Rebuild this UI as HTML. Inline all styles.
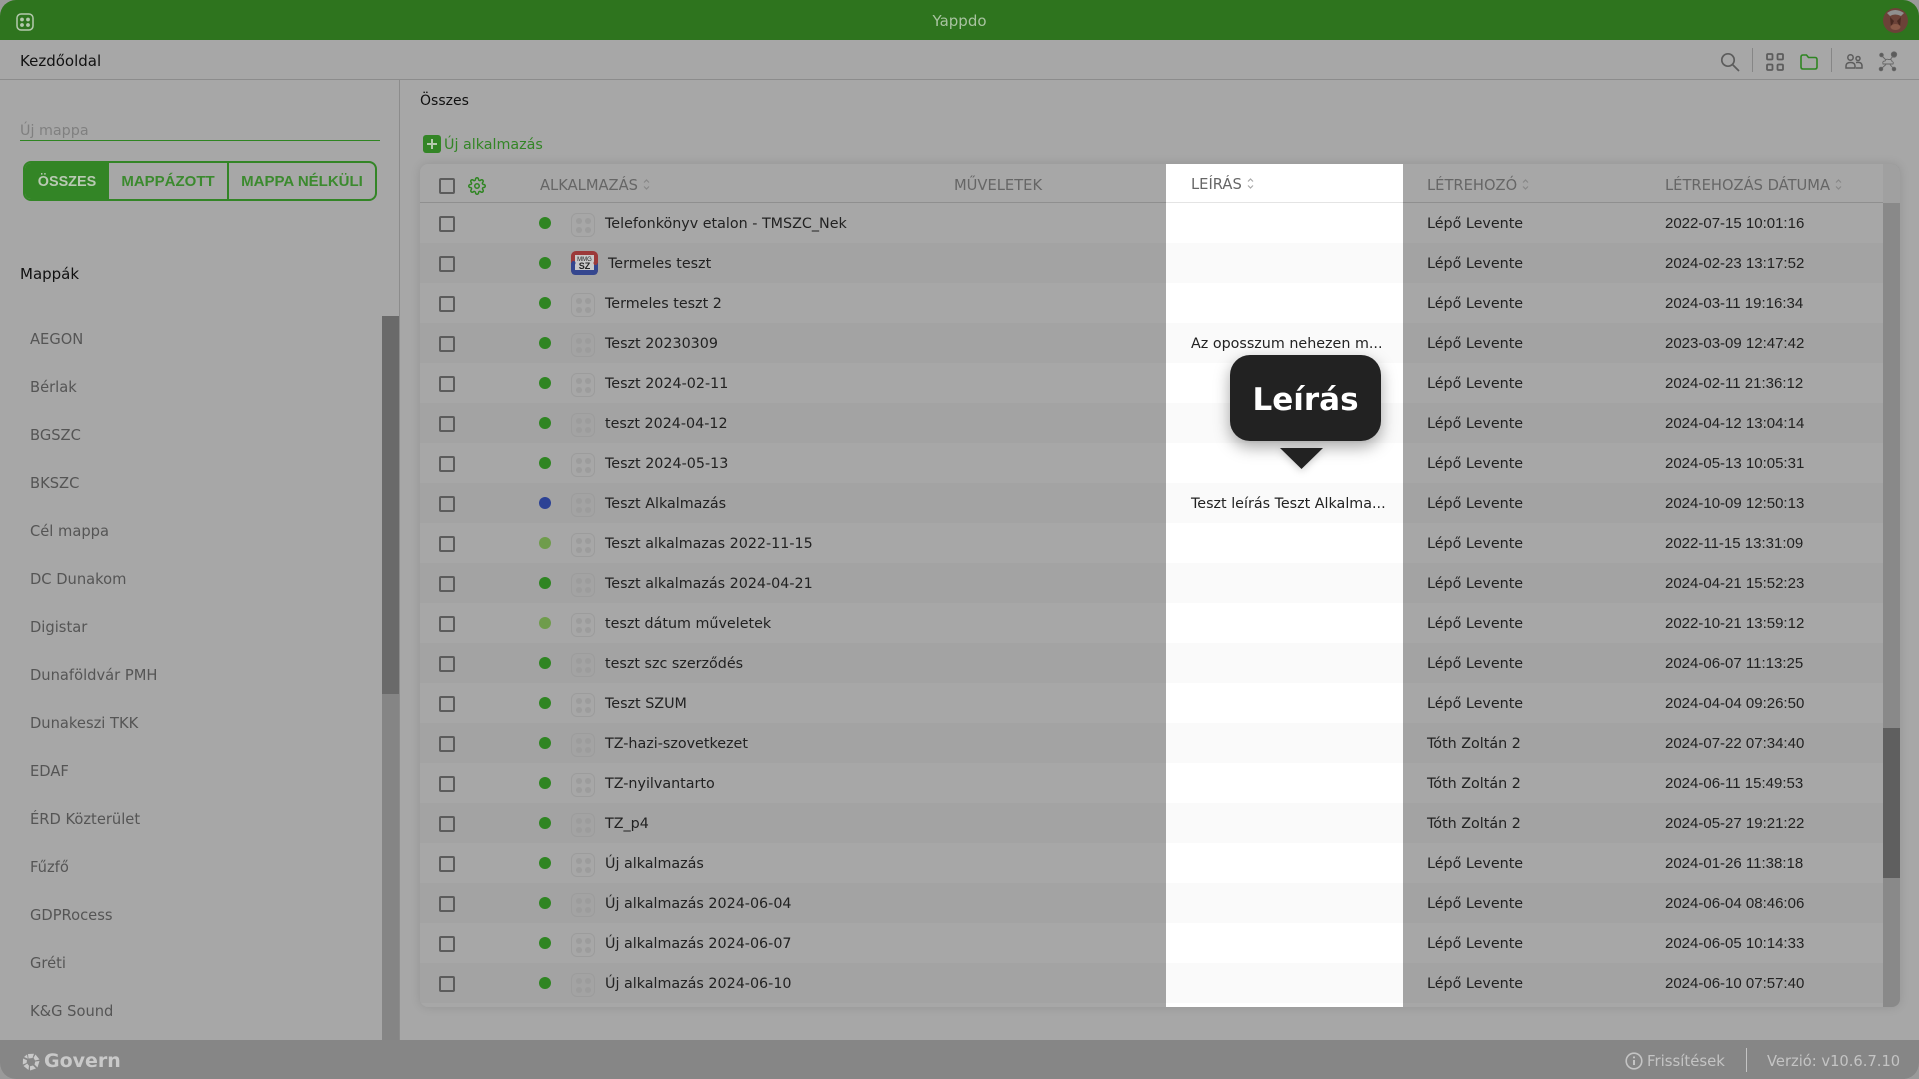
<!DOCTYPE html>
<html lang="hu"><head><meta charset="utf-8"><title>Yappdo</title>
<style>
*{box-sizing:border-box}
html,body{margin:0;padding:0;width:1919px;height:1079px;overflow:hidden;background:#9a9a9a}
body{font-family:"DejaVu Sans","Liberation Sans",sans-serif;font-size:14.3px;color:#222;position:relative}
.a{position:absolute;white-space:nowrap}
#app{position:absolute;left:0;top:0;width:1919px;height:1079px;background:#a7a7a7;border-radius:16px;overflow:hidden}
.fold{position:absolute;left:30px;color:#555;font-size:14.7px;line-height:22px}
.row{position:absolute;left:0;width:1463px;height:40px}
.row.o{background:#a3a3a3}
.row>*{position:absolute;white-space:nowrap;line-height:42px}
.cb{left:19px;top:13px;width:16px;height:16px;border:2px solid #5c5c5c;border-radius:2px;background:transparent}
.dot{left:119px;top:14px;width:12px;height:12px;border-radius:50%;background:#2f8522}
.ic{left:151px;top:10px;width:24px;height:24px;border:1.5px solid #9c9c9c;border-radius:6px}
.ic:before{content:"";position:absolute;left:4px;top:4px;width:6px;height:6px;border-radius:50%;background:#9c9c9c;box-shadow:9px 0 #9c9c9c,0 9px #9c9c9c,9px 9px #9c9c9c}
.n{left:185px}
.c1{left:1007px}
.c2{left:1245px;font-family:"Liberation Sans",sans-serif;font-size:15px}
.hd{position:absolute;top:0;line-height:43px;color:#666;font-size:14.7px;white-space:nowrap}
.hd svg,.lh svg{display:inline-block;margin-left:5px;vertical-align:-1px}
.sp{position:absolute;left:1166px;top:203px;width:237px;height:804px;background:#fff}
.sp div{position:absolute;left:0;width:237px;height:40px;line-height:42px;padding-left:25px;white-space:nowrap;color:#222}
.sp .o{background:#fafafa}
</style></head>
<body>
<div id="app">
<!-- top bar -->
<div class="a" style="left:0;top:0;width:1919px;height:40px;background:#2e741e"></div>
<svg class="a" style="left:16px;top:13px" width="18" height="18" viewBox="0 0 18 18"><rect x="1" y="1" width="16" height="16" rx="4" fill="none" stroke="#b5c9ae" stroke-width="1.5"/><circle cx="6" cy="6.5" r="1.9" fill="#b5c9ae"/><circle cx="12" cy="6.5" r="1.9" fill="#b5c9ae"/><circle cx="6" cy="12" r="1.9" fill="#b5c9ae"/><circle cx="12" cy="12" r="1.9" fill="#b5c9ae"/></svg>
<div class="a" style="left:0;top:1px;width:1919px;text-align:center;line-height:40px;color:#a9c3a1;font-size:15px">Yappdo</div>
<svg class="a" style="left:1883px;top:8px" width="25" height="25" viewBox="0 0 25 25"><circle cx="12.5" cy="12.5" r="12.5" fill="#6b4238"/><path d="M4 5Q12-1 21 5L18 8Q12 5 7 8Z" fill="#8f8f8f"/><path d="M7 9L11 13L8 19ZM18 9L14 13L17 19Z" fill="#4a2a22"/><ellipse cx="12.5" cy="19" rx="5" ry="3" fill="#8a5a48"/></svg>

<!-- sub bar -->
<div class="a" style="left:0;top:40px;width:1919px;height:40px;border-bottom:1.5px solid #8c8c8c;background:#a7a7a7"></div>
<div class="a" style="left:20px;top:41px;line-height:40px;color:#111;font-size:15px">Kezdőoldal</div>
<svg class="a" style="left:1720px;top:52px" width="20" height="20" viewBox="0 0 20 20" fill="none" stroke="#5c5c5c" stroke-width="1.7"><circle cx="8" cy="8" r="6.2"/><path d="M12.6 12.6L19 19"/></svg>
<div class="a" style="left:1752px;top:48px;width:1px;height:24px;background:#868686"></div>
<svg class="a" style="left:1766px;top:53px" width="18" height="18" viewBox="0 0 18 18" fill="none" stroke="#5c5c5c" stroke-width="1.8"><rect x="1" y="1" width="5.5" height="5.5" rx="1"/><rect x="11.5" y="1" width="5.5" height="5.5" rx="1"/><rect x="1" y="11.5" width="5.5" height="5.5" rx="1"/><rect x="11.5" y="11.5" width="5.5" height="5.5" rx="1"/></svg>
<svg class="a" style="left:1800px;top:54px" width="18" height="16" viewBox="0 0 18 16" fill="none" stroke="#2f8522" stroke-width="1.6"><path d="M1 3Q1 1 3 1H6.5L8.5 3.5H15Q17 3.5 17 5.5V13Q17 15 15 15H3Q1 15 1 13Z"/></svg>
<div class="a" style="left:1831px;top:48px;width:1px;height:24px;background:#868686"></div>
<svg class="a" style="left:1845px;top:54px" width="18" height="15" viewBox="0 0 18 15" fill="none" stroke="#5c5c5c" stroke-width="1.5"><circle cx="5.5" cy="3.5" r="2.7"/><circle cx="13" cy="4.5" r="2"/><path d="M1 14V12Q1 8.5 5.5 8.5T10 12V14Z"/><path d="M11 8.5Q17 7.5 17 12V14H11"/></svg>
<svg class="a" style="left:1878px;top:51px" width="20" height="21" viewBox="0 0 20 21" fill="none" stroke="#666" stroke-width=".9"><circle cx="3.5" cy="4" r="1.8" fill="#5c5c5c"/><circle cx="16" cy="3.5" r="2.7" fill="#5c5c5c"/><circle cx="3" cy="18" r="1.8" fill="#5c5c5c"/><circle cx="16" cy="18" r="1.8" fill="#5c5c5c"/><path d="M4 5L8 9M15 5L12 9M4 17L8 13.5M15 17L12 13.5"/><path d="M5 13Q4 10 7 10Q8 7.5 10.5 8.5Q14 8 14 10.5Q16 11 15 13Z"/></svg>

<!-- sidebar -->
<div class="a" style="left:399px;top:80px;width:1px;height:960px;background:#8c8c8c"></div>
<div class="a" style="left:20px;top:120px;line-height:22px;color:#808080;font-size:14.3px">Új mappa</div>
<div class="a" style="left:20px;top:139.5px;width:360px;height:1.5px;background:#2f8522"></div>
<div class="a" style="left:23px;top:161px;width:354px;height:40px;border:2px solid #338526;border-radius:8px;overflow:hidden;font-size:15px;color:#3b8a2e;line-height:38px;font-family:'Liberation Sans',sans-serif;font-weight:bold">
  <div class="a" style="left:0;top:0;width:84px;height:36px;background:#338526;color:#b9c9b3;text-align:center;font-size:14.4px">ÖSSZES</div>
  <div class="a" style="left:84px;top:0;width:120px;height:36px;border-right:2px solid #338526;text-align:center">MAPPÁZOTT</div>
  <div class="a" style="left:204px;top:0;width:146px;height:36px;text-align:center">MAPPA NÉLKÜLI</div>
</div>
<div class="a" style="left:20px;top:264px;line-height:20px;color:#111;font-size:15px">Mappák</div>
<div class="fold" style="top:329px">AEGON</div>
<div class="fold" style="top:377px">Bérlak</div>
<div class="fold" style="top:425px">BGSZC</div>
<div class="fold" style="top:473px">BKSZC</div>
<div class="fold" style="top:521px">Cél mappa</div>
<div class="fold" style="top:569px">DC Dunakom</div>
<div class="fold" style="top:617px">Digistar</div>
<div class="fold" style="top:665px">Dunaföldvár PMH</div>
<div class="fold" style="top:713px">Dunakeszi TKK</div>
<div class="fold" style="top:761px">EDAF</div>
<div class="fold" style="top:809px">ÉRD Közterület</div>
<div class="fold" style="top:857px">Fűzfő</div>
<div class="fold" style="top:905px">GDPRocess</div>
<div class="fold" style="top:953px">Gréti</div>
<div class="fold" style="top:1001px">K&amp;G Sound</div>
<div class="a" style="left:382px;top:316px;width:17px;height:724px;background:#858585"></div>
<div class="a" style="left:382px;top:316px;width:17px;height:378px;background:#6a6a6a"></div>

<!-- main -->
<div class="a" style="left:420px;top:91px;line-height:20px;color:#111;font-size:14px">Összes</div>
<svg class="a" style="left:423px;top:135px" width="18" height="18" viewBox="0 0 18 18"><rect width="18" height="18" rx="3" fill="#338526"/><path d="M9 4V14M4 9H14" stroke="#b5c9ae" stroke-width="2"/></svg>
<div class="a" style="left:444px;top:135px;line-height:20px;color:#338526;font-size:14.3px">Új alkalmazás</div>

<!-- table -->
<div class="a" style="left:420px;top:164px;width:1480px;height:843px;background:#a7a7a7;border-radius:8px;box-shadow:0 0 10px rgba(0,0,0,.12);overflow:hidden">
  <div class="a" style="left:0;top:0;width:1480px;height:39px;border-bottom:1.5px solid #8f8f8f"></div>
  <div class="a" style="left:19px;top:14px;width:16px;height:16px;border:2px solid #5c5c5c;border-radius:2px"></div>
  <svg class="a" style="left:48px;top:13px" width="18" height="18" viewBox="0 0 24 24" fill="none" stroke="#2f8522" stroke-width="2"><circle cx="12" cy="12" r="3"/><path d="M19.4 15a1.65 1.65 0 0 0 .33 1.82l.06.06a2 2 0 0 1 0 2.83 2 2 0 0 1-2.83 0l-.06-.06a1.65 1.65 0 0 0-1.82-.33 1.65 1.65 0 0 0-1 1.51V21a2 2 0 0 1-2 2 2 2 0 0 1-2-2v-.09A1.65 1.65 0 0 0 9 19.4a1.65 1.65 0 0 0-1.82.33l-.06.06a2 2 0 0 1-2.83 0 2 2 0 0 1 0-2.83l.06-.06a1.65 1.65 0 0 0 .33-1.82 1.65 1.65 0 0 0-1.51-1H3a2 2 0 0 1-2-2 2 2 0 0 1 2-2h.09A1.65 1.65 0 0 0 4.6 9a1.65 1.65 0 0 0-.33-1.82l-.06-.06a2 2 0 0 1 0-2.83 2 2 0 0 1 2.83 0l.06.06a1.65 1.65 0 0 0 1.82.33H9a1.65 1.65 0 0 0 1-1.51V3a2 2 0 0 1 2-2 2 2 0 0 1 2 2v.09a1.65 1.65 0 0 0 1 1.51 1.65 1.65 0 0 0 1.82-.33l.06-.06a2 2 0 0 1 2.83 0 2 2 0 0 1 0 2.83l-.06.06a1.65 1.65 0 0 0-.33 1.82V9a1.65 1.65 0 0 0 1.51 1H21a2 2 0 0 1 2 2 2 2 0 0 1-2 2h-.09a1.65 1.65 0 0 0-1.51 1z"/></svg>
  <div class="hd" style="left:120px">ALKALMAZÁS<svg width="7" height="13" viewBox="0 0 7 13" fill="none" stroke="#888" stroke-width="1.2"><path d="M1 4.5L3.5 2L6 4.5M1 8.5L3.5 11L6 8.5"/></svg></div>
  <div class="hd" style="left:534px">MŰVELETEK</div>
  <div class="hd" style="left:1007px">LÉTREHOZÓ<svg width="7" height="13" viewBox="0 0 7 13" fill="none" stroke="#888" stroke-width="1.2"><path d="M1 4.5L3.5 2L6 4.5M1 8.5L3.5 11L6 8.5"/></svg></div>
  <div class="hd" style="left:1245px">LÉTREHOZÁS DÁTUMA<svg width="7" height="13" viewBox="0 0 7 13" fill="none" stroke="#888" stroke-width="1.2"><path d="M1 4.5L3.5 2L6 4.5M1 8.5L3.5 11L6 8.5"/></svg></div>

  <div class="a" style="left:0;top:39px;width:1463px;height:804px">
   <div class="row" style="top:0"><span class="cb"></span><span class="dot"></span><span class="ic"></span><span class="n">Telefonkönyv etalon - TMSZC_Nek</span><span class="c1">Lépő Levente</span><span class="c2">2022-07-15 10:01:16</span></div>
   <div class="row o" style="top:40px"><span class="cb"></span><span class="dot"></span>
     <svg style="position:absolute;left:151px;top:8px" width="27" height="24" viewBox="0 0 27 24"><rect width="27" height="24" rx="5" fill="#9c3a3a"/><path d="M0 12H27V19Q27 24 22 24H5Q0 24 0 19Z" fill="#35478f"/><rect x="4" y="4" width="19" height="15" fill="#c9c9c9"/><circle cx="2.5" cy="12" r="2" fill="#35478f"/><circle cx="24.5" cy="12" r="2" fill="#9c3a3a"/><text x="13.5" y="10" text-anchor="middle" font-family="Liberation Sans" font-size="6" fill="#222">MMG</text><text x="13.5" y="18" text-anchor="middle" font-family="Liberation Sans" font-weight="bold" font-size="9" fill="#222">SZ</text></svg>
     <span class="n" style="left:188px">Termeles teszt</span><span class="c1">Lépő Levente</span><span class="c2">2024-02-23 13:17:52</span></div>
   <div class="row" style="top:80px"><span class="cb"></span><span class="dot"></span><span class="ic"></span><span class="n">Termeles teszt 2</span><span class="c1">Lépő Levente</span><span class="c2">2024-03-11 19:16:34</span></div>
   <div class="row o" style="top:120px"><span class="cb"></span><span class="dot"></span><span class="ic"></span><span class="n">Teszt 20230309</span><span class="c1">Lépő Levente</span><span class="c2">2023-03-09 12:47:42</span></div>
   <div class="row" style="top:160px"><span class="cb"></span><span class="dot"></span><span class="ic"></span><span class="n">Teszt 2024-02-11</span><span class="c1">Lépő Levente</span><span class="c2">2024-02-11 21:36:12</span></div>
   <div class="row o" style="top:200px"><span class="cb"></span><span class="dot"></span><span class="ic"></span><span class="n">teszt 2024-04-12</span><span class="c1">Lépő Levente</span><span class="c2">2024-04-12 13:04:14</span></div>
   <div class="row" style="top:240px"><span class="cb"></span><span class="dot"></span><span class="ic"></span><span class="n">Teszt 2024-05-13</span><span class="c1">Lépő Levente</span><span class="c2">2024-05-13 10:05:31</span></div>
   <div class="row o" style="top:280px"><span class="cb"></span><span class="dot" style="background:#2c4295"></span><span class="ic"></span><span class="n">Teszt Alkalmazás</span><span class="c1">Lépő Levente</span><span class="c2">2024-10-09 12:50:13</span></div>
   <div class="row" style="top:320px"><span class="cb"></span><span class="dot" style="background:#6f9c4c"></span><span class="ic"></span><span class="n">Teszt alkalmazas 2022-11-15</span><span class="c1">Lépő Levente</span><span class="c2">2022-11-15 13:31:09</span></div>
   <div class="row o" style="top:360px"><span class="cb"></span><span class="dot"></span><span class="ic"></span><span class="n">Teszt alkalmazás 2024-04-21</span><span class="c1">Lépő Levente</span><span class="c2">2024-04-21 15:52:23</span></div>
   <div class="row" style="top:400px"><span class="cb"></span><span class="dot" style="background:#6f9c4c"></span><span class="ic"></span><span class="n">teszt dátum műveletek</span><span class="c1">Lépő Levente</span><span class="c2">2022-10-21 13:59:12</span></div>
   <div class="row o" style="top:440px"><span class="cb"></span><span class="dot"></span><span class="ic"></span><span class="n">teszt szc szerződés</span><span class="c1">Lépő Levente</span><span class="c2">2024-06-07 11:13:25</span></div>
   <div class="row" style="top:480px"><span class="cb"></span><span class="dot"></span><span class="ic"></span><span class="n">Teszt SZUM</span><span class="c1">Lépő Levente</span><span class="c2">2024-04-04 09:26:50</span></div>
   <div class="row o" style="top:520px"><span class="cb"></span><span class="dot"></span><span class="ic"></span><span class="n">TZ-hazi-szovetkezet</span><span class="c1">Tóth Zoltán 2</span><span class="c2">2024-07-22 07:34:40</span></div>
   <div class="row" style="top:560px"><span class="cb"></span><span class="dot"></span><span class="ic"></span><span class="n">TZ-nyilvantarto</span><span class="c1">Tóth Zoltán 2</span><span class="c2">2024-06-11 15:49:53</span></div>
   <div class="row o" style="top:600px"><span class="cb"></span><span class="dot"></span><span class="ic"></span><span class="n">TZ_p4</span><span class="c1">Tóth Zoltán 2</span><span class="c2">2024-05-27 19:21:22</span></div>
   <div class="row" style="top:640px"><span class="cb"></span><span class="dot"></span><span class="ic"></span><span class="n">Új alkalmazás</span><span class="c1">Lépő Levente</span><span class="c2">2024-01-26 11:38:18</span></div>
   <div class="row o" style="top:680px"><span class="cb"></span><span class="dot"></span><span class="ic"></span><span class="n">Új alkalmazás 2024-06-04</span><span class="c1">Lépő Levente</span><span class="c2">2024-06-04 08:46:06</span></div>
   <div class="row" style="top:720px"><span class="cb"></span><span class="dot"></span><span class="ic"></span><span class="n">Új alkalmazás 2024-06-07</span><span class="c1">Lépő Levente</span><span class="c2">2024-06-05 10:14:33</span></div>
   <div class="row o" style="top:760px"><span class="cb"></span><span class="dot"></span><span class="ic"></span><span class="n">Új alkalmazás 2024-06-10</span><span class="c1">Lépő Levente</span><span class="c2">2024-06-10 07:57:40</span></div>
  </div>
  <div class="a" style="left:1463px;top:0;width:17px;height:843px;background:#898989"></div>
  <div class="a" style="left:1463px;top:0;width:17px;height:39px;background:#a0a0a0"></div>
  <div class="a" style="left:1463px;top:564px;width:17px;height:150px;background:#5f5f5f"></div>
</div>

<!-- spotlight column -->
<div class="a lh" style="left:1166px;top:164px;width:237px;height:39px;background:#fff;border-bottom:1px solid #e4e4e4;line-height:42px;padding-left:25px;color:#666;font-size:14.7px">LEÍRÁS<svg width="7" height="13" viewBox="0 0 7 13" fill="none" stroke="#aaa" stroke-width="1.2"><path d="M1 4.5L3.5 2L6 4.5M1 8.5L3.5 11L6 8.5"/></svg></div>
<div class="sp">
  <div style="top:0"></div><div class="o" style="top:40px"></div><div style="top:80px"></div>
  <div class="o" style="top:120px">Az oposszum nehezen m...</div>
  <div style="top:160px"></div><div class="o" style="top:200px"></div><div style="top:240px"></div>
  <div class="o" style="top:280px">Teszt leírás Teszt Alkalma...</div>
  <div style="top:320px"></div><div class="o" style="top:360px"></div><div style="top:400px"></div><div class="o" style="top:440px"></div><div style="top:480px"></div><div class="o" style="top:520px"></div><div style="top:560px"></div><div class="o" style="top:600px"></div><div style="top:640px"></div><div class="o" style="top:680px"></div><div style="top:720px"></div><div class="o" style="top:760px"></div>
</div>

<!-- tooltip -->
<div class="a" style="left:1230px;top:355px;width:151px;height:86px;background:#222;border-radius:20px;box-shadow:0 6px 16px rgba(0,0,0,.35);color:#fff;font-weight:bold;font-size:31px;line-height:90px;text-align:center;font-family:'DejaVu Sans',sans-serif">Leírás</div>
<svg class="a" style="left:1280px;top:448px;filter:drop-shadow(0 2px 4px rgba(0,0,0,.2))" width="43" height="22" viewBox="0 0 43 22"><path d="M0 0H43L21.5 21Z" fill="#222"/></svg>

<!-- footer -->
<div class="a" style="left:0;top:1040px;width:1919px;height:39px;background:#868686"></div>
<svg class="a" style="left:22px;top:1053px" width="18" height="18" viewBox="0 0 18 18" fill="#c9c9c9"><path d="M6 1L12 .8L10.5 5L6.5 5.5ZM13.5 1.5L17.5 6.5L13 7.5L11.5 4.8ZM17.5 8L15.5 14.5L12.5 11.5L13.3 8.5ZM14 15.5L8 17.5L8 13.3L11 12.5ZM6.5 17L1.5 13L5.2 10.5L7 12.8ZM.8 11.5L1 5.5L5 7.3L4.5 10ZM2 4L5 1.5L5.8 5.6Z"/></svg>
<div class="a" style="left:44px;top:1042px;line-height:39px;color:#c9c9c9;font-size:19px;font-weight:bold;font-family:'DejaVu Sans',sans-serif">Govern</div>
<svg class="a" style="left:1625px;top:1052px" width="18" height="18" viewBox="0 0 18 18" fill="none" stroke="#c4c4c4" stroke-width="1.6"><circle cx="9" cy="9" r="7.8"/><path d="M9 8V13M9 4.5V6.3" stroke-width="2"/></svg>
<div class="a" style="left:1647px;top:1042px;line-height:39px;color:#c4c4c4;font-size:14.9px">Frissítések</div>
<div class="a" style="left:1746px;top:1048px;width:1px;height:24px;background:#c4c4c4"></div>
<div class="a" style="left:1767px;top:1042px;line-height:39px;color:#c4c4c4;font-size:14.7px">Verzió: v10.6.7.10</div>
</div>
</body></html>
